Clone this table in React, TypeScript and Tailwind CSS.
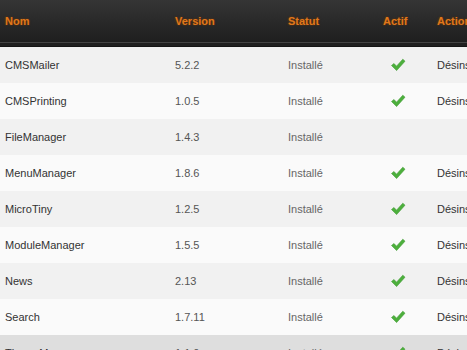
const modules = [
  { name: "CMSMailer", version: "5.2.2", active: true },
  { name: "CMSPrinting", version: "1.0.5", active: true },
  { name: "FileManager", version: "1.4.3", active: false },
  { name: "MenuManager", version: "1.8.6", active: true },
  { name: "MicroTiny", version: "1.2.5", active: true },
  { name: "ModuleManager", version: "1.5.5", active: true },
  { name: "News", version: "2.13", active: true },
  { name: "Search", version: "1.7.11", active: true },
  { name: "ThemeManager", version: "1.1.0", active: true },
];

function Tick() {
  return (
    <svg width="16" height="14" viewBox="0 0 16 14" className="block">
      <path
        d="M1.5 7.5 L4 5.5 L6.5 8.2 L12.8 1.2 L15 3.2 L6.6 12.6 Z"
        fill="#4caf3c"
        stroke="#3f9a32"
        strokeWidth="0.6"
        strokeLinejoin="round"
      />
    </svg>
  );
}

export default function App() {
  return (
    <div className="w-[467px] h-[350px] overflow-hidden bg-white font-['Liberation_Sans',Arial,sans-serif] text-[11px]">
      <div className="w-[520px]">
        {/* header */}
        <div className="h-[47px] bg-gradient-to-b from-[#353535] to-[#1c1c1c] flex flex-col">
          <div className="flex flex-1 items-center font-bold text-[#e0781c] [text-shadow:0_0_2px_#7a3a00]">
            <div className="w-[175px] pl-[5px]">Nom</div>
            <div className="w-[113px]">Version</div>
            <div className="w-[95px]">Statut</div>
            <div className="w-[54px]">Actif</div>
            <div className="flex-1">Action</div>
          </div>
          <div className="h-[5px] border-t border-[#444] bg-[#202020] border-b border-b-[#151515]" />
        </div>
        {/* rows */}
        {modules.map((m, i) => (
          <div
            key={m.name}
            className={
              "h-[36px] flex items-center " +
              (i === 8 ? "bg-[#dedede]" : i % 2 === 0 ? "bg-[#f1f1f1]" : "bg-[#fafafa]")
            }
          >
            <div className="w-[175px] pl-[5px] text-[#333]">{m.name}</div>
            <div className="w-[113px] text-[#555]">{m.version}</div>
            <div className="w-[95px] text-[#666]">Installé</div>
            <div className="w-[54px] flex justify-start pl-[7px]">{m.active && <Tick />}</div>
            <div className="flex-1 text-[#333]">{m.active ? "Désinstaller" : ""}</div>
          </div>
        ))}
      </div>
    </div>
  );
}
